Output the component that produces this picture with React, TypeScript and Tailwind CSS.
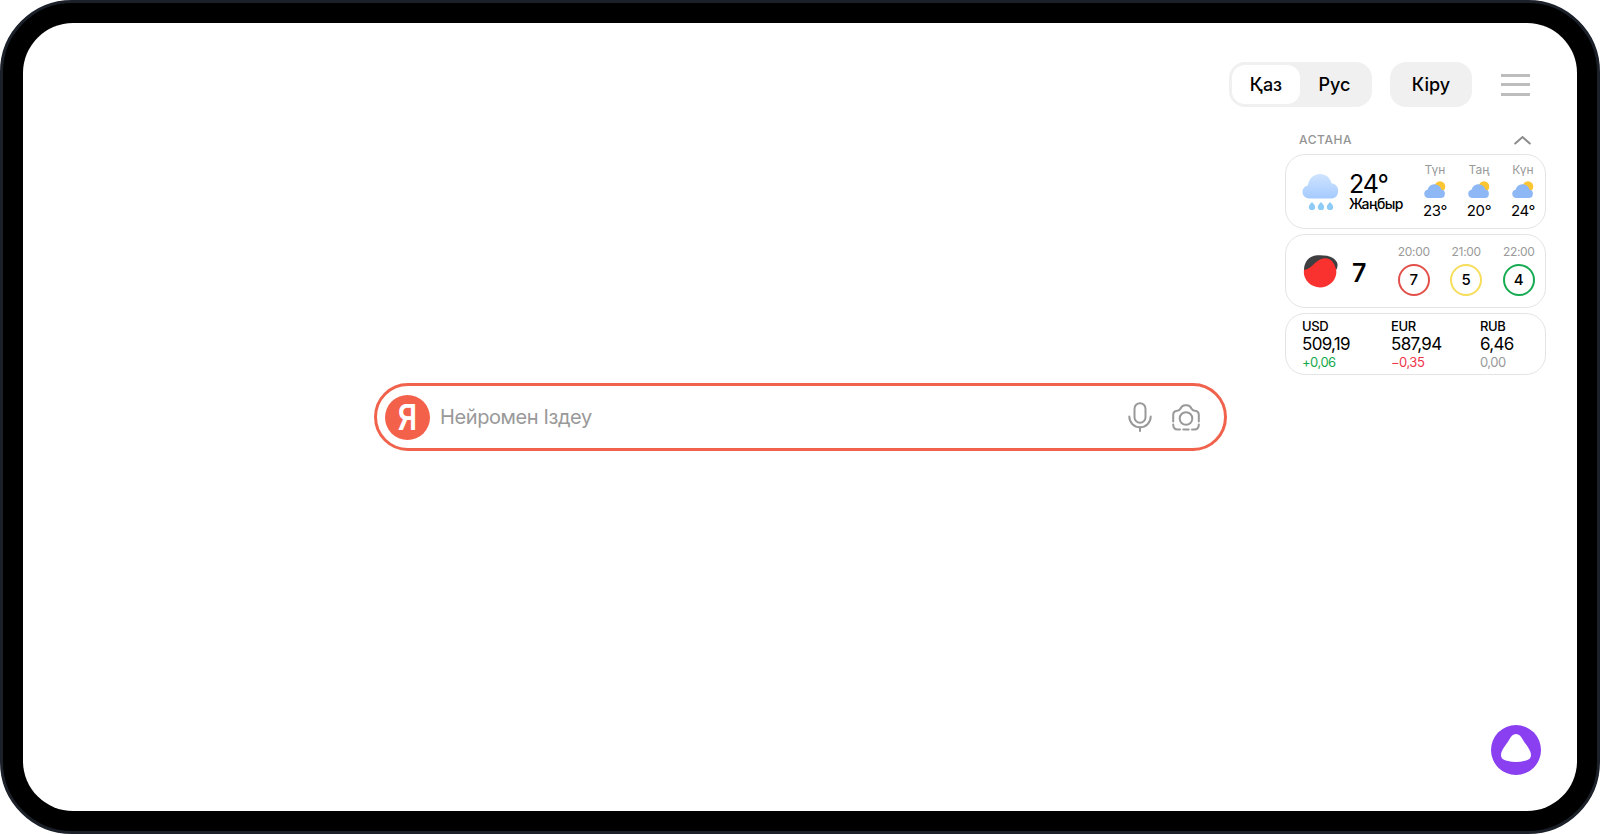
const forecast = [
  { label: 'Түн', temp: '23°' },
  { label: 'Таң', temp: '20°' },
  { label: 'Күн', temp: '24°' },
]

const traffic = [
  { time: '20:00', score: 7, ring: 'border-[#e2504a]' },
  { time: '21:00', score: 5, ring: 'border-[#f6de5a]' },
  { time: '22:00', score: 4, ring: 'border-[#17ab52]' },
]

const rates = [
  { code: 'USD', value: '509,19', delta: '+0,06', tone: 'text-[#12a94c]' },
  { code: 'EUR', value: '587,94', delta: '−0,35', tone: 'text-[#f0344a]' },
  { code: 'RUB', value: '6,46', delta: '0,00', tone: 'text-[#999999]' },
]

function RainCloud() {
  return (
    <svg width="38" height="37" viewBox="0 0 38 37" className="shrink-0">
      <defs>
        <linearGradient id="rain" x1="0" y1="0" x2="0" y2="1">
          <stop offset="0" stopColor="#cfe3ff" />
          <stop offset="1" stopColor="#a5cbff" />
        </linearGradient>
      </defs>
      <path
        d="M7 25.500a6.500 6.500 0 0 1-1.200-12.900C6.600 6 11.500 1 18 1c5.800 0 10.300 3.800 11.500 9.300A7.800 7.800 0 0 1 30.500 25.500z"
        fill="url(#rain)"
      />
      <path d="M10 29c2 2.300 3.200 3.500 3.200 5a3.200 3.200 0 0 1-6.400 0C6.800 32.500 8 31.300 10 29z" fill="#8ecbf7" />
      <path d="M19 29c2 2.300 3.200 3.500 3.200 5a3.200 3.200 0 0 1-6.400 0C15.800 32.500 17 31.300 19 29z" fill="#8ecbf7" />
      <path d="M28 29c2 2.300 3.200 3.500 3.200 5a3.200 3.200 0 0 1-6.400 0C24.800 32.500 26 31.300 28 29z" fill="#8ecbf7" />
    </svg>
  )
}

function SunCloud() {
  return (
    <svg width="22" height="18" viewBox="0 0 22 18">
      <circle cx="16" cy="5.500" r="5.300" fill="#fcc531" />
      <path
        d="M4.500 17a4.200 4.200 0 0 1-.9-8.300C4.500 5.300 7.300 3.200 10.500 3.200c3.400 0 6 2.100 6.900 5.300A4.300 4.300 0 0 1 17 17z"
        fill="#8db7f5"
      />
    </svg>
  )
}

function TrafficDrop() {
  return (
    <svg width="35" height="33" viewBox="0 0 35 33" className="shrink-0">
      <path
        d="M1 15C1 7 6 1 14 .3 19 0 26 .3 30 3 33.500 5.500 35 8.500 34.500 11 34.300 13 33.500 15 32.700 15L20 20z"
        fill="#3f3f41"
      />
      <path
        d="M1 15C6 14 9 11 12 8 15 5 19 3.300 22.700 3.300 27 3.300 31 7 32.700 13 33.500 16 33.500 18 33 20 31.500 27 25 32.400 17 32.400 8 32.400 .8 25 .8 17z"
        fill="#f9312f"
      />
    </svg>
  )
}

function MicIcon() {
  return (
    <svg width="24" height="30" viewBox="0 0 24 30" fill="none" stroke="#999999" strokeWidth="2" strokeLinecap="round">
      <rect x="6.500" y="1.200" width="11" height="19.500" rx="5.500" />
      <path d="M1.300 14.500c0 6.200 4.800 10.700 10.700 10.700s10.700-4.500 10.700-10.700" />
      <path d="M12 25.500v3.500" />
    </svg>
  )
}

function CameraIcon() {
  return (
    <svg width="28" height="27" viewBox="0 0 28 27" fill="none" stroke="#999999" strokeWidth="2" strokeLinecap="round">
      <circle cx="14" cy="14.500" r="6.300" />
      <path d="M1.200 17.500V11c0-2.400 1.600-4 4-4.200 1.500-.1 2.500-.6 3.200-2C9.500 2.500 10.800 1.200 13 1.200h2c2.200 0 3.500 1.300 4.600 3.600.7 1.400 1.700 1.900 3.200 2 2.400.2 4 1.800 4 4.200v6.500" />
      <path d="M1.200 20.500c0 3 1.800 5 4.500 5h2.300" />
      <path d="M26.800 20.500c0 3-1.800 5-4.500 5H20" />
      <path d="M11.300 25.500h5.400" />
    </svg>
  )
}

function AliceMark() {
  return (
    <svg width="50" height="50" viewBox="0 0 50 50">
      <circle cx="25" cy="25" r="25" fill="#8a3ff0" />
      <path
        d="M25 9C28 9 30 11 32 15 35 20 40 25 40 30 40 33.500 37.500 35 34 35.700 31 36.500 28 37 25 37 22 37 19 36.500 16 35.700 12.500 35 10 33.500 10 30 10 25 15 20 18 15 20 11 22 9 25 9z"
        fill="#ffffff"
      />
    </svg>
  )
}

export default function App() {
  return (
    <div className="h-[834px] w-[1600px] overflow-hidden bg-white font-['Inter',sans-serif] text-black">
      <div className="h-full w-full rounded-[72px] border-[3px] border-[#1b2029] bg-black p-5">
        <div className="grid h-full w-full grid-cols-1 grid-rows-1 rounded-[50px] bg-white">
          {/* search, centred on the whole frame */}
          <div className="col-start-1 row-start-1 flex items-center justify-center">
            <div className="flex h-[68px] w-[853px] items-center rounded-full border-[3px] border-[#f0624b] pl-[8.500px] pr-[23.500px]">
              <span className="flex h-[45px] w-[45px] shrink-0 items-center justify-center rounded-full bg-[#f4614a] text-[35px] font-semibold text-white">
                <span className="scale-x-[0.85]">Я</span>
              </span>
              <span className="ml-[10px] flex-1 text-[20px] tracking-[-0.4px] text-[#999999]">Нейромен Іздеу</span>
              <MicIcon />
              <span className="ml-5">
                <CameraIcon />
              </span>
            </div>
          </div>

          <div className="col-start-1 row-start-1 flex flex-col items-end pr-[31px] pt-[39px]">
            <div className="mr-4 flex items-center">
              <div className="flex h-[45px] w-[143px] items-center rounded-[16px] bg-[#f0f0f0] p-[3px] text-[18px] font-medium">
                <span className="flex h-[39px] w-[68px] items-center justify-center rounded-[13px] bg-white">Қаз</span>
                <span className="flex flex-1 items-center justify-center">Рус</span>
              </div>
              <span className="ml-[18px] flex h-[45px] w-[82px] items-center justify-center rounded-[16px] bg-[#f0f0f0] text-[18px] font-medium">
                Кіру
              </span>
              <div className="ml-[29px] flex w-[29px] flex-col gap-[6.500px]">
                <span className="h-[3px] bg-[#bdbdbd]" />
                <span className="h-[3px] bg-[#bdbdbd]" />
                <span className="h-[3px] bg-[#bdbdbd]" />
              </div>
            </div>

            <div className="mt-[25px] flex h-[16px] w-[261px] items-center justify-between pl-[14px] pr-[15px]">
              <span className="text-[12px] font-medium tracking-[0.6px] text-[#949494]">АСТАНА</span>
              <svg width="17" height="10" viewBox="0 0 17 10" fill="none" stroke="#8c8c8c" strokeWidth="2" strokeLinecap="round">
                <path d="M1.200 8.500 8.500 2l7.300 6.500" />
              </svg>
            </div>

            <div className="mt-[6px] flex h-[75px] w-[261px] items-center rounded-[20px] border border-[#e4e4e4] pl-4">
              <RainCloud />
              <div className="ml-[9px] flex w-[67px] flex-col">
                <span className="text-[25px] leading-[24px] tracking-[-1px]">24°</span>
                <span className="text-[14px] font-medium leading-[16px] tracking-[-0.6px]">Жаңбыр</span>
              </div>
              <div className="flex">
                {forecast.map((f) => (
                  <div key={f.label} className="flex w-[44px] flex-col items-center pb-[2px]">
                    <span className="text-[12px] leading-[16px] text-[#9a9a9a]">{f.label}</span>
                    <span className="mt-[3px] flex">
                      <SunCloud />
                    </span>
                    <span className="mt-[3px] text-[15px] leading-[18px] tracking-[-0.3px]">{f.temp}</span>
                  </div>
                ))}
              </div>
            </div>

            <div className="mt-[5px] flex h-[74px] w-[261px] items-center rounded-[20px] border border-[#e4e4e4] pl-[17px]">
              <TrafficDrop />
              <span className="ml-[14px] w-[37px] pt-[6px] text-[25px] font-semibold">7</span>
              <div className="flex pb-[2px]">
                {traffic.map((t) => (
                  <div key={t.time} className="flex w-[52.500px] flex-col items-center">
                    <span className="text-[12px] leading-[16px] tracking-[-0.3px] text-[#9a9a9a]">{t.time}</span>
                    <span className={`mt-[4px] flex h-[32px] w-[32px] items-center justify-center rounded-full border-[2.500px] text-[15px] font-medium ${t.ring}`}>
                      {t.score}
                    </span>
                  </div>
                ))}
              </div>
            </div>

            <div className="mt-[5px] grid h-[62px] w-[261px] grid-cols-[89px_89px_1fr] items-center rounded-[20px] border border-[#e4e4e4] pl-4">
              {rates.map((r) => (
                <div key={r.code} className="flex flex-col">
                  <span className="mt-[1px] text-[13px] font-medium leading-[15px] tracking-[-0.4px]">{r.code}</span>
                  <span className="text-[17px] leading-[20px] tracking-[-0.7px]">{r.value}</span>
                  <span className={`text-[13px] leading-[16px] tracking-[-0.5px] ${r.tone}`}>{r.delta}</span>
                </div>
              ))}
            </div>
          </div>

          {/* alice button */}
          <div className="col-start-1 row-start-1 mb-[36px] mr-[36px] self-end justify-self-end">
            <AliceMark />
          </div>
        </div>
      </div>
    </div>
  )
}
